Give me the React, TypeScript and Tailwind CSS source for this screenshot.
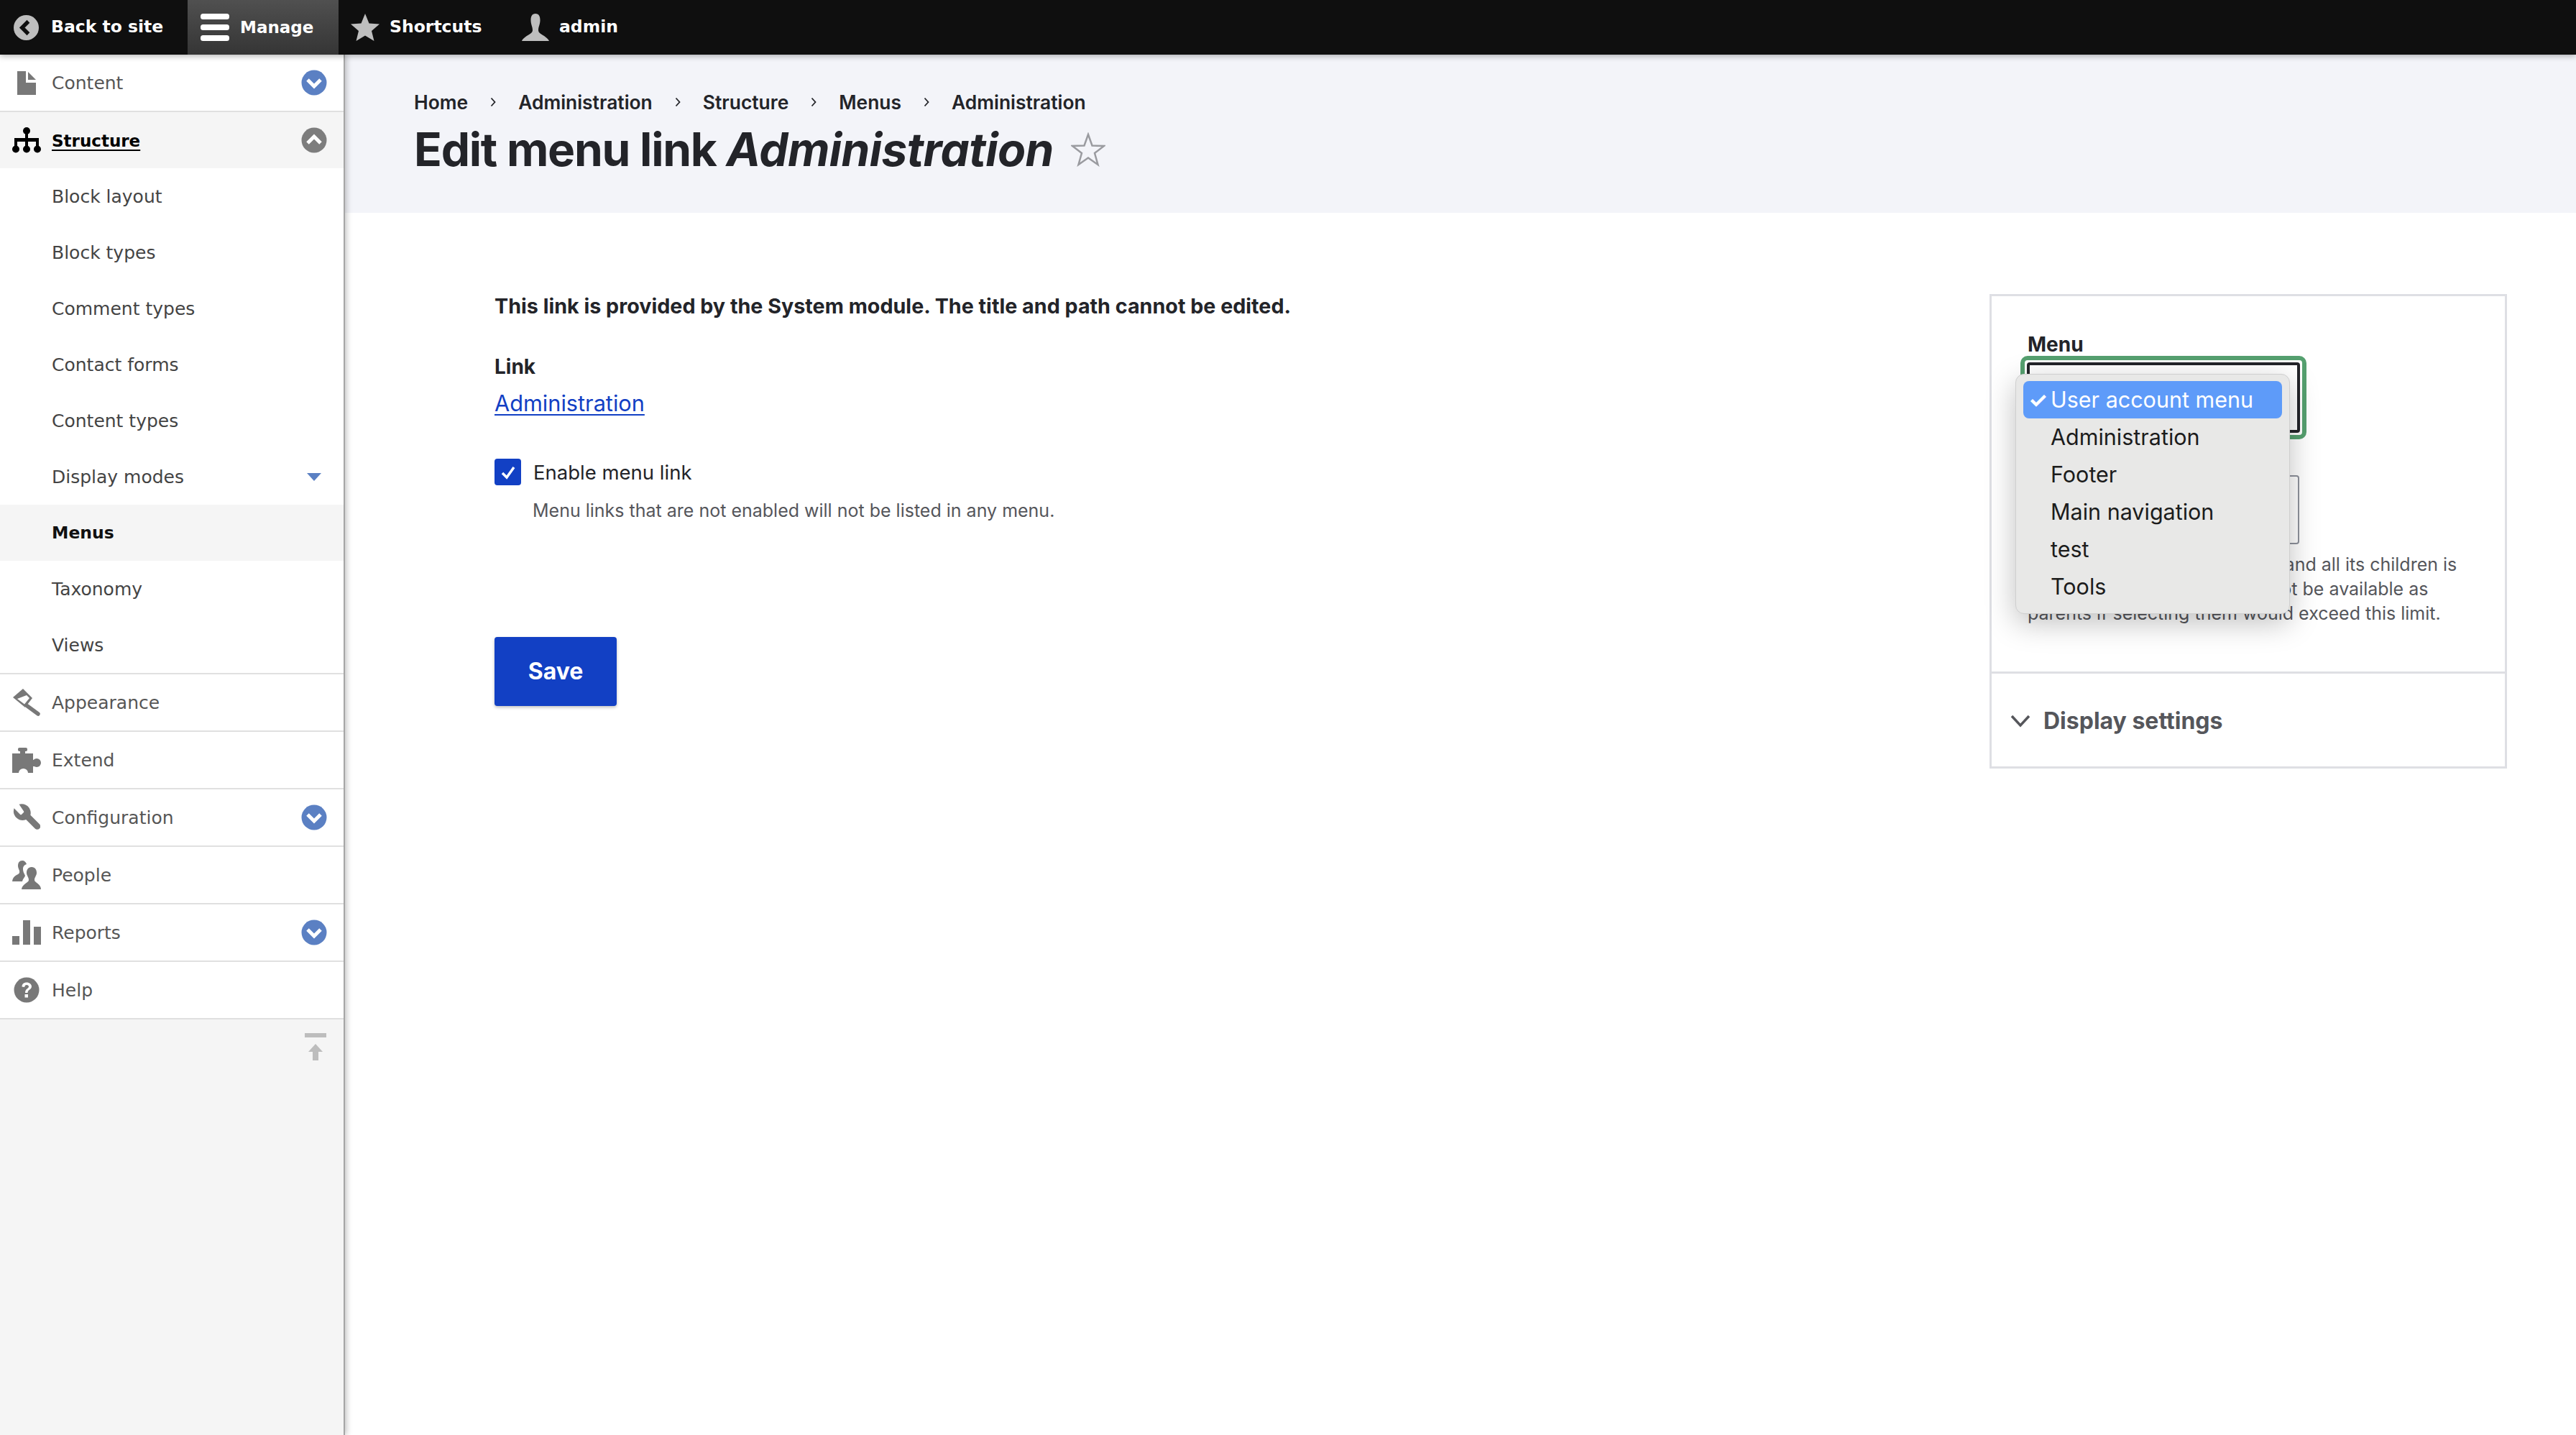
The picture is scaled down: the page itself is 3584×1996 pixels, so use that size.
import React from "react";

const GRAY = "#787878";

function Chevron({ up, color }: { up?: boolean; color: string }) {
  return (
    <svg width="36" height="36" viewBox="0 0 36 36" className="block">
      <circle cx="18" cy="18" r="17.5" fill={color} />
      <path d={up ? "M9 22 L18 13 L27 22" : "M9 14 L18 23 L27 14"} fill="none" stroke="#fff" strokeWidth="5" />
    </svg>
  );
}

const icons: Record<string, React.ReactNode> = {
  Content: (
    <svg width="26" height="33" viewBox="0 0 26 33"><path d="M0 0H12V16H26V33H0Z" fill={GRAY} /><path d="M15 1L26 12H15Z" fill={GRAY} /></svg>
  ),
  Structure: (
    <svg width="40" height="36" viewBox="0 0 40 36" fill="#000">
      <circle cx="20" cy="5" r="5" /><rect x="18" y="5" width="4" height="12" /><rect x="3" y="15" width="34" height="5" rx="2.5" />
      <rect x="3" y="15" width="4" height="15" /><rect x="18" y="15" width="4" height="15" /><rect x="33" y="15" width="4" height="15" />
      <circle cx="5" cy="30.5" r="5" /><circle cx="20" cy="30.5" r="5" /><circle cx="35" cy="30.5" r="5" />
    </svg>
  ),
  Appearance: (
    <svg width="38" height="38" viewBox="0 0 38 38" fill={GRAY}>
      <path d="M0 12L14 0L27 13L17 26Z" />
      <path d="M6 14L19 9L23 13L16 21.5Z" fill="#fff" />
      <path d="M20 24L35 35" stroke={GRAY} strokeWidth="5.5" strokeLinecap="round" />
    </svg>
  ),
  Extend: (
    <svg width="40" height="35" viewBox="0 0 40 35" fill={GRAY}>
      <rect x="8" y="0" width="13" height="5" rx="2" /><rect x="11" y="3" width="7" height="8" />
      <path d="M0 8H29V17H34V26H29V35H22A6.5 6 0 0 0 9 35H0Z" /><circle cx="34" cy="21" r="6" />
    </svg>
  ),
  Configuration: (
    <svg width="38" height="38" viewBox="0 0 24 24" fill={GRAY} style={{ transform: "scaleX(-1)" }}>
      <path d="M14.7 6.3a1 1 0 0 0 0 1.4l1.6 1.6a1 1 0 0 0 1.4 0l5.3-5.3a8 8 0 0 1-10.5 9.9L4.6 21.8a2.6 2.6 0 0 1-3.9-3.9l7.9-8A8 8 0 0 1 18.6 .4z" />
    </svg>
  ),
  People: (
    <svg width="40" height="40" viewBox="0 0 40 40" fill={GRAY}>
      <path d="M14 0C10 0 8 3 8 7C8 12 11 13 10 17C9 20 1 20 0 29H14C15 25 17 24 18 21C16 17 15 15 15 12C15 8 17 6 20 5C19 2 17 0 14 0Z" />
      <path d="M27 9C22 9 20 13 20 17C20 21 23 23 23 27C23 31 14 32 13 40H40C40 32 31 31 31 27C31 23 34 21 34 17C34 13 32 9 27 9Z" />
    </svg>
  ),
  Reports: (
    <svg width="40" height="34" viewBox="0 0 40 34" fill={GRAY}><rect x="0" y="22" width="10" height="12" /><rect x="15" y="0" width="10" height="34" /><rect x="30" y="9" width="10" height="25" /></svg>
  ),
  Help: (
    <svg width="36" height="36" viewBox="0 0 36 36">
      <circle cx="18" cy="18" r="17.5" fill={GRAY} />
      <path d="M11.5 13.5C11.5 9.5 14.5 7.5 18 7.5C22 7.5 25 10 25 13C25 17.5 19.5 17.5 19.5 22H16C16 16 21 16 21 13.5C21 12 20 11 18 11C16 11 15.2 12.5 15.2 14Z" fill="#fff" />
      <rect x="15.5" y="24" width="4.5" height="4.5" fill="#fff" />
    </svg>
  ),
};

function TopRow({ label, chevron }: { label: string; chevron?: boolean }) {
  return (
    <div className="flex h-[80px] items-center border-b-2 border-[#e0e0e0] bg-white text-[#565656]">
      <div className="flex w-[72px] shrink-0 justify-center pl-[2px]">{icons[label]}</div>
      <span className="flex-1 pt-[2px]">{label}</span>
      {chevron && <div className="mr-[23px]"><Chevron color="#5b80c3" /></div>}
    </div>
  );
}

function SubRow({ label, active, tri }: { label: string; active?: boolean; tri?: boolean }) {
  return (
    <div className={`flex h-[78px] items-center pl-[72px] ${active ? "bg-[#f5f5f5] text-[23.5px] font-bold text-[#111]" : "bg-white text-[#444]"}`}>
      <span className="flex-1 pt-[2px]">{label}</span>
      {tri && <svg width="20" height="11" viewBox="0 0 20 11" className="mr-[31px]"><path d="M0 0H20L10 11Z" fill="#5b80c3" /></svg>}
    </div>
  );
}

function Sep() {
  return (
    <svg width="10" height="14" viewBox="0 0 10 14"><path d="M2.5 1.5L7.5 7L2.5 12.5" fill="none" stroke="#232429" strokeWidth="1.8" /></svg>
  );
}

export default function App() {
  const crumbs = ["Home", "Administration", "Structure", "Menus", "Administration"];
  return (
    <div className="flex h-[1996px] w-[3584px] flex-col overflow-hidden bg-white font-['Inter',sans-serif] text-[#232429]">
      {/* toolbar */}
      <div className="relative z-20 flex h-[76px] shrink-0 items-stretch bg-[#0f0f0f] font-['DejaVu_Sans',sans-serif] text-[23.5px] font-bold text-white shadow-[0_2px_8px_rgba(0,0,0,0.3)]">
        <div className="flex w-[261px] items-center gap-[17px] pl-[19px]">
          <svg width="35" height="35" viewBox="0 0 36 36"><circle cx="18" cy="18" r="18" fill="#bebebe" /><path d="M21 9L12 18L21 27" fill="none" stroke="#0f0f0f" strokeWidth="5.5" /></svg>
          <span>Back to site</span>
        </div>
        <div className="flex w-[210px] items-center gap-[15px] bg-gradient-to-b from-[#505050] to-[#353535] pl-[18px]">
          <svg width="40" height="38" viewBox="0 0 40 38" fill="#fff"><rect width="40" height="8" rx="3.5" /><rect y="15" width="40" height="8" rx="3.5" /><rect y="30" width="40" height="8" rx="3.5" /></svg>
          <span className="text-[23px]">Manage</span>
        </div>
        <div className="flex w-[243px] items-center gap-[14px] pl-[17px]">
          <svg width="40" height="38" viewBox="0 0 40 38" fill="#bebebe"><path d="M20 0L25.5 13.5L40 14.5L29 24L32.5 38L20 30.5L7.5 38L11 24L0 14.5L14.5 13.5Z" /></svg>
          <span>Shortcuts</span>
        </div>
        <div className="flex items-center gap-[13px] pl-[11px]">
          <svg width="40" height="38" viewBox="0 0 40 38" fill="#bebebe"><path d="M20 0C15 0 13.5 4 13.5 9C13.5 15 16 18 16 23C16 29 5 30 1 38H39C35 30 24 29 24 23C24 18 26.5 15 26.5 9C26.5 4 25 0 20 0Z" /></svg>
          <span>admin</span>
        </div>
      </div>

      <div className="flex min-h-0 flex-1">
        {/* sidebar */}
        <aside className="relative z-10 flex w-[480px] shrink-0 flex-col border-r-2 border-[#a6a6a6] bg-[#f5f5f5] font-['DejaVu_Sans',sans-serif] text-[25px] shadow-[2px_0_8px_rgba(0,0,0,0.25)]">
          <TopRow label="Content" chevron />
          <div className="flex h-[78px] items-center bg-[#f5f5f5] font-bold text-black">
            <div className="flex w-[72px] shrink-0 justify-center pl-[2px]">{icons.Structure}</div>
            <span className="flex-1 pt-[2px] text-[23px] underline decoration-2 underline-offset-4">Structure</span>
            <div className="mr-[23px]"><Chevron up color="#7d7d7d" /></div>
          </div>
          <SubRow label="Block layout" />
          <SubRow label="Block types" />
          <SubRow label="Comment types" />
          <SubRow label="Contact forms" />
          <SubRow label="Content types" />
          <SubRow label="Display modes" tri />
          <SubRow label="Menus" active />
          <SubRow label="Taxonomy" />
          <div className="flex h-[80px] items-center border-b-2 border-[#e0e0e0] bg-white pt-[2px] pl-[72px] text-[#444]">Views</div>
          <TopRow label="Appearance" />
          <TopRow label="Extend" />
          <TopRow label="Configuration" chevron />
          <TopRow label="People" />
          <TopRow label="Reports" chevron />
          <TopRow label="Help" />
          <div className="flex justify-end pt-[19px] pr-[24px]">
            <svg width="30" height="38" viewBox="0 0 30 38" fill="#bdbdbd"><rect width="30" height="6" /><path d="M15 15L25 26H19V38H11V26H5Z" /></svg>
          </div>
        </aside>

        {/* main */}
        <main className="min-w-0 flex-1">
          <header className="h-[220px] bg-[#f3f4f9] pt-[50px] pl-[96px]">
            <div className="flex h-[32px] items-center gap-[30px] text-[26.4px] leading-[32px] font-semibold">
              {crumbs.map((c, i) => (
                <React.Fragment key={i}>
                  {i > 0 && <Sep />}
                  <span>{c}</span>
                </React.Fragment>
              ))}
            </div>
            <div className="mt-[14px] flex items-center gap-[24px]">
              <h1 className="text-[64px] leading-[72px] font-bold tracking-[-1.25px]">
                Edit menu link <em className="tracking-[-0.62px]">Administration</em>
              </h1>
              <svg width="48" height="48" viewBox="0 0 48 48"><path d="M24 3L29.5 18.5L46 19L33 29L37.5 45L24 35.5L10.5 45L15 29L2 19L18.5 18.5Z" fill="none" stroke="#9a9ba0" strokeWidth="2.5" /></svg>
            </div>
          </header>

          <div className="flex justify-between pr-[96px] pl-[208px]">
            {/* form */}
            <div className="pt-[113px]">
              <p className="text-[28.7px] leading-[34px] font-bold">This link is provided by the System module. The title and path cannot be edited.</p>
              <p className="mt-[49px] text-[28px] leading-[36px] font-bold">Link</p>
              <a className="mt-[13px] block text-[30.7px] leading-[40px] text-[#1240c4] underline decoration-2 underline-offset-4">Administration</a>
              <div className="mt-[57px] flex items-center gap-[17px]">
                <div className="flex h-[37px] w-[37px] items-center justify-center rounded-[4px] bg-[#1240c4]">
                  <svg width="24" height="24" viewBox="0 0 24 24"><path d="M4 13L10 19L20 5" fill="none" stroke="#fff" strokeWidth="3.5" /></svg>
                </div>
                <span className="text-[27.5px] leading-[36px]">Enable menu link</span>
              </div>
              <p className="mt-[20px] ml-[53px] text-[25px] leading-[30px] text-[#55565b]">Menu links that are not enabled will not be listed in any menu.</p>
              <button className="mt-[161px] h-[96px] w-[170px] rounded-[4px] bg-[#1240c4] text-[32px] font-bold text-white shadow-[0_2px_4px_rgba(0,0,0,0.25)]">Save</button>
            </div>

            {/* right panel */}
            <div className="mt-[113px] h-fit w-[720px] shrink-0 border-[3px] border-[#dedfe4] bg-white">
              <div className="relative h-[525px] border-b-[3px] border-[#dedfe4] pt-[50px] pl-[50px]">
                <div className="text-[28px] leading-[34px] font-bold">Menu</div>
                <div className="mt-[-1px] ml-[-10px] h-[116px] w-[398px] rounded-[10px] border-[6px] border-[#55a06f] bg-white p-[3px]">
                  <div className="h-full w-full rounded-[4px] border-[4px] border-[#232429]" />
                </div>
                <div className="mt-[50px] h-[96px] w-[378px] rounded-[4px] border-2 border-[#8e929c]" />
                <p className="mt-[11px] w-[630px] text-[25px] leading-[34px] text-[#55565b]">
                  The maximum depth for a link and all its children is fixed. Some menu links may not be available as parents if selecting them would exceed this limit.
                </p>

                {/* open native select list */}
                <div className="absolute top-[108px] left-[33px] h-[334px] w-[382px] rounded-[12px] border border-[#cfcfcf] bg-[#e8e8e7] px-[10px] pt-[9px] text-[30.5px] leading-[52px] text-[#1c1c1c] shadow-[0_12px_40px_rgba(0,0,0,0.25)]">
                  <div className="relative rounded-[8px] bg-[#5e9bf9] pl-[38px] text-white">
                    <span className="absolute top-0 left-[7px] text-[30px] font-bold">✓</span>User account menu
                  </div>
                  <div className="pl-[38px]">Administration</div>
                  <div className="pl-[38px]">Footer</div>
                  <div className="pl-[38px]">Main navigation</div>
                  <div className="pl-[38px]">test</div>
                  <div className="pl-[38px]">Tools</div>
                </div>
              </div>
              <div className="flex h-[129px] items-center gap-[18px] pt-[2px] pl-[26px] text-[32px] font-bold text-[#55565b]">
                <svg width="28" height="18" viewBox="0 0 28 18"><path d="M2 2L14 15L26 2" fill="none" stroke="#55565b" strokeWidth="3.5" /></svg>
                <span>Display settings</span>
              </div>
            </div>
          </div>
        </main>
      </div>
    </div>
  );
}
